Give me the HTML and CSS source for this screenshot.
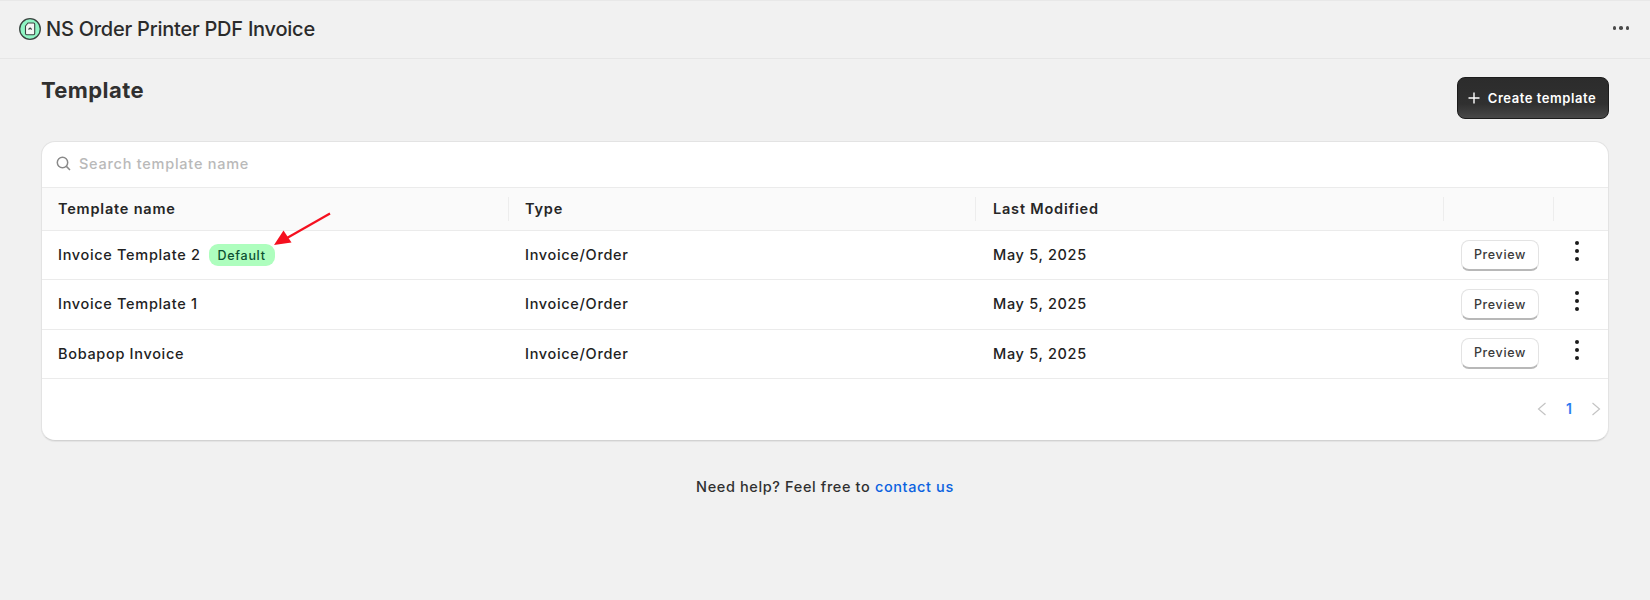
FILE: index.html
```html
<!DOCTYPE html>
<html lang="en">
<head>
<meta charset="utf-8">
<title>NS Order Printer PDF Invoice</title>
<link rel="stylesheet" href="styles.css">
</head>
<body>
<header class="topbar">
  <div class="brand">
    <svg class="logo" width="22" height="22" viewBox="0 0 22 22"><circle cx="11" cy="11" r="10.300" fill="#8ff5c4" stroke="#3a4440" stroke-width="1.300"/><path d="M6.500 8 L9 5 H14.500 a1.200 1.200 0 0 1 1.200 1.200 V15.500 a1.200 1.200 0 0 1 -1.200 1.200 H7.700 a1.200 1.200 0 0 1 -1.200 -1.200 Z" fill="#f4f7f5" stroke="#3a4440" stroke-width="1.100"/><path d="M9.500 11.500 L11.100 10 L12.700 11.500" fill="none" stroke="#3a4440" stroke-width="1.200"/></svg>
    <span class="brand-name">NS Order Printer PDF Invoice</span>
  </div>
  <div class="dots-h"><i></i><i></i><i></i></div>
</header>
<main class="page">
  <div class="page-head">
    <h1 class="page-title">Template</h1>
    <button class="btn-create"><svg width="12" height="12" viewBox="0 0 12 12"><path d="M6 .5V11.500M.5 6H11.500" stroke="#fff" stroke-width="1.400" fill="none"/></svg>Create template</button>
  </div>
  <section class="card">
    <div class="search">
      <svg width="15" height="15" viewBox="0 0 15 15"><circle cx="6.500" cy="6.500" r="5.200" fill="none" stroke="#8a8a8a" stroke-width="1.500"/><path d="M10.400 10.400L14 14" stroke="#8a8a8a" stroke-width="1.500" fill="none"/></svg>
      <span class="search-text">Search template name</span>
    </div>
    <div class="row row-head">
      <div class="cell sep">Template name</div>
      <div class="cell sep">Type</div>
      <div class="cell sep cell-modified">Last Modified</div>
      <div class="cell sep"></div>
      <div class="cell"></div>
    </div>
    <div class="row row-1">
      <div class="cell">Invoice Template 2<span class="badge">Default<svg class="arrow" width="60" height="36" viewBox="0 0 60 36"><path d="M57 1.500 L14 26" stroke="#f5101f" stroke-width="2.200" fill="none"/><path d="M1 33 L10.500 18.500 L18.500 30.500 Z" fill="#f5101f"/></svg></span></div>
      <div class="cell">Invoice/Order</div>
      <div class="cell cell-modified">May 5, 2025</div>
      <div class="cell cell-action"><button class="btn-preview">Preview</button></div>
      <div class="cell cell-more"><div class="dots-v"><i></i><i></i><i></i></div></div>
    </div>
    <div class="row row-2">
      <div class="cell">Invoice Template 1</div>
      <div class="cell">Invoice/Order</div>
      <div class="cell cell-modified">May 5, 2025</div>
      <div class="cell cell-action"><button class="btn-preview">Preview</button></div>
      <div class="cell cell-more"><div class="dots-v"><i></i><i></i><i></i></div></div>
    </div>
    <div class="row row-3">
      <div class="cell">Bobapop Invoice</div>
      <div class="cell">Invoice/Order</div>
      <div class="cell cell-modified">May 5, 2025</div>
      <div class="cell cell-action"><button class="btn-preview btn-preview-up">Preview</button></div>
      <div class="cell cell-more"><div class="dots-v"><i></i><i></i><i></i></div></div>
    </div>
    <div class="pager">
      <svg width="10" height="14" viewBox="0 0 10 14"><path d="M8.500 1L1.500 7L8.500 13" fill="none" stroke="#c4c4c4" stroke-width="1.200"/></svg>
      <span class="page-num">1</span>
      <svg width="10" height="14" viewBox="0 0 10 14"><path d="M1.500 1L8.500 7L1.500 13" fill="none" stroke="#c4c4c4" stroke-width="1.200"/></svg>
    </div>
  </section>
  <p class="help">Need help? Feel free to <a class="help-link" href="#">contact us</a></p>
</main>
</body>
</html>
```

FILE: styles.css
```css
* { box-sizing: border-box; }
html, body { margin: 0; height: 100%; }
body {
  background: #f1f1f1;
  font-family: Inter, "Noto Sans", sans-serif;
  color: #202020;
  overflow: hidden;
}
.topbar {
  height: 59px;
  display: flex;
  align-items: center;
  justify-content: space-between;
  padding: 0 21px 0 19px;
  border-top: 1px solid #e8e8e8;
  border-bottom: 1px solid #e6e6e6;
}
.brand { display: flex; align-items: center; gap: 3px; }
.logo { display: block; margin-top: -2px; }
.brand-name { font-size: 20px; font-weight: 500; color: #2b2b2b; letter-spacing: -0.24px; margin-left: 2px; margin-top: -2px; }
.dots-h { display: flex; gap: 3px; margin-top: -3px; }
.dots-h i { width: 3.500px; height: 3.500px; border-radius: 50%; background: #4a4a4a; display: block; }
.page { padding: 0 41px 0 41px; }
.page-head {
  height: 82px;
  display: flex;
  justify-content: space-between;
  align-items: flex-start;
  padding-top: 18px;
}
.page-title { margin: 0; font-size: 22px; line-height: 26px; font-weight: 700; color: #303030; letter-spacing: 0.4px; }
.btn-create {
  height: 42px;
  width: 152px;
  display: flex;
  align-items: center;
  justify-content: center;
  gap: 8px;
  padding: 0 8px 0 6px;
  border: 1px solid #1c1c1c;
  border-radius: 8px;
  background: linear-gradient(#2c2c2c, #303030 65%, #484848);
  color: #fff;
  font: 600 13px Inter, sans-serif;
  letter-spacing: 0.55px;
}
.card {
  height: 300px;
  background: #fff;
  border: 1px solid #e3e3e3;
  border-bottom-color: #d2d2d2;
  border-radius: 14px;
  overflow: hidden;
  box-shadow: 0 1px 1px rgba(0,0,0,.06);
}
.search {
  height: 46px;
  display: flex;
  align-items: center;
  gap: 8px;
  padding-left: 14px;
  padding-bottom: 3px;
  border-bottom: 1px solid #ebebeb;
}
.search-text { font-size: 14.500px; color: #b9b9b9; font-weight: 500; letter-spacing: 0.75px; }
.row {
  display: grid;
  grid-template-columns: 467px 467px 468px 110px 1fr;
  align-items: center;
  border-bottom: 1px solid #ebebeb;
  font-size: 14.500px;
  font-weight: 500;
  letter-spacing: 0.68px;
  color: #222;
}
.row-head { height: 43px; background: #fafafa; font-weight: 600; color: #262626; letter-spacing: 0.8px; }
.row-head .cell { padding-bottom: 1px; }
.row-1 { height: 49px; }
.row-2 { height: 50px; }
.row-3 { height: 49px; }
.cell { padding: 0 0 2px 16px; display: flex; align-items: center; min-height: 24px; }
.row .cell-modified { padding-left: 17px; }
.sep { border-right: 1px solid #ededed; }
.badge {
  position: relative;
  margin: 2px 0 0 8px;
  height: 22px;
  width: 66px;
  border-radius: 9px;
  background: #aefebe;
  color: #0c5132;
  font-size: 12.500px;
  letter-spacing: 0.7px;
  display: flex;
  align-items: center;
  justify-content: center;
}
.arrow { position: absolute; left: 64px; top: -32px; }
.cell-action { padding: 0 0 0 17px; }
.btn-preview {
  width: 78px;
  height: 31px;
  border: 1px solid #e3e3e3;
  border-bottom: 2px solid #b8b8b8;
  border-radius: 8px;
  background: #fff;
  color: #3a3a3a;
  font: 500 12.500px Inter, sans-serif;
  letter-spacing: 0.65px;
}
.btn-preview-up { margin-bottom: 2px; }
.cell-more { padding: 0 0 0 21px; }
.dots-v { display: flex; flex-direction: column; gap: 4px; margin-top: -8px; }
.dots-v i { width: 4px; height: 4px; border-radius: 50%; background: #1a1a1a; display: block; }
.pager {
  height: 59px;
  display: flex;
  align-items: center;
  justify-content: flex-end;
  gap: 19px;
  padding-right: 7px;
}
.page-num { font-size: 14px; font-weight: 600; color: #2c7bf0; }
.help {
  margin: 36px 0 0;
  text-align: center;
  font-size: 14.500px;
  line-height: 20px;
  font-weight: 500;
  letter-spacing: 0.62px;
  color: #303030;
}
.help-link { color: #0b62e0; text-decoration: none; font-weight: 500; }
```
